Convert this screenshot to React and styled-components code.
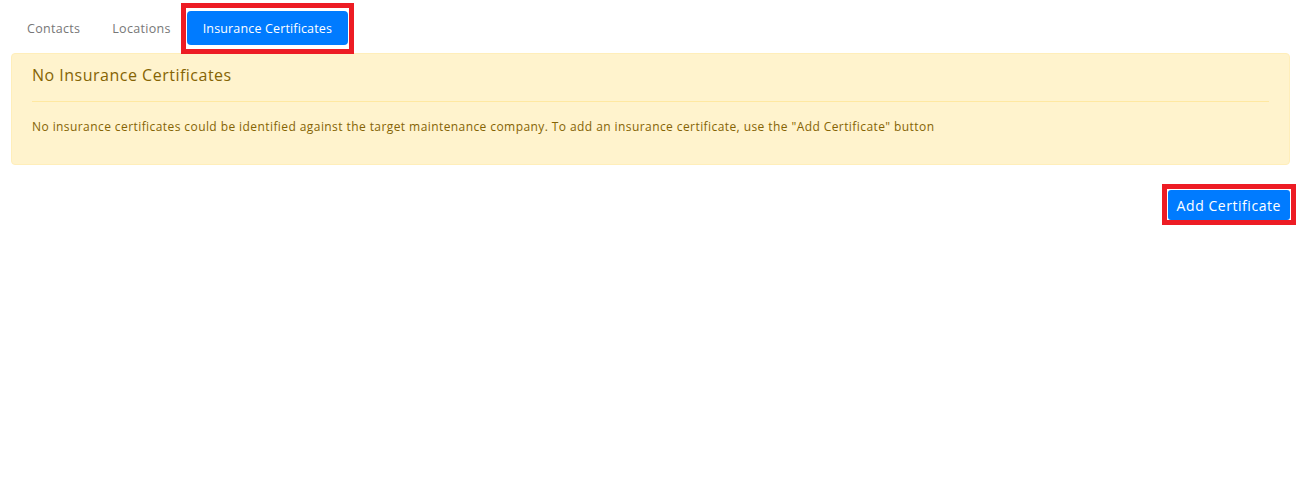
import React, { useState } from 'react'
import styled, { createGlobalStyle } from 'styled-components'

const GlobalStyle = createGlobalStyle`
  body {
    margin: 0;
    background: #fff;
    font-family: "Open Sans", "Liberation Sans", sans-serif;
  }
  * {
    box-sizing: border-box;
  }
`

const tabs = ['Contacts', 'Locations', 'Insurance Certificates']

const App = () => {
  const [active, setActive] = useState(2)

  return (
    <PageWrapper>
      <GlobalStyle />
      <TabBar>
        {tabs.map((tab, i) =>
          i === active ? (
            <Highlight key={tab} $top={8} $side={6} $bottom={9}>
              <TabLink $active onClick={() => setActive(i)}>
                {tab}
              </TabLink>
            </Highlight>
          ) : (
            <TabLink key={tab} onClick={() => setActive(i)}>
              {tab}
            </TabLink>
          )
        )}
      </TabBar>

      <Alert>
        <AlertHeading>No Insurance Certificates</AlertHeading>
        <AlertRule />
        <AlertText>
          No insurance certificates could be identified against the target maintenance company. To add an insurance
          certificate, use the "Add Certificate" button
        </AlertText>
      </Alert>

      <Actions>
        <Highlight $top={6} $side={6} $bottom={5}>
          <AddBtn type="button">Add Certificate</AddBtn>
        </Highlight>
      </Actions>
    </PageWrapper>
  )
}

export default App

const PageWrapper = styled.div`
  padding: 11px 14px 40px 11px;
`

const TabBar = styled.nav`
  display: flex;
  align-items: center;
  height: 34px;
  margin-bottom: 8px;
`

// red annotation frame drawn over an element
const Highlight = styled.span`
  position: relative;
  display: inline-flex;

  &::after {
    content: '';
    position: absolute;
    top: -${(props) => props.$top}px;
    bottom: -${(props) => props.$bottom}px;
    left: -${(props) => props.$side}px;
    right: -${(props) => props.$side}px;
    border: 5px solid #ed1c24;
    pointer-events: none;
  }
`

const TabLink = styled.a`
  display: flex;
  align-items: center;
  height: 34px;
  padding: 0 16px;
  border-radius: 4px;
  cursor: pointer;

  font-size: 12.5px;
  letter-spacing: ${(props) => (props.$active ? '0.15px' : '0.3px')};
  font-weight: ${(props) => (props.$active ? 500 : 400)};
  color: ${(props) => (props.$active ? '#fff' : '#777')};
  background: ${(props) => (props.$active ? '#007bff' : 'transparent')};
`

const Alert = styled.div`
  padding: 12px 20px;
  border: 1px solid #ffeeba;
  border-radius: 4px;
  background: #fff3cd;
  color: #856404;
`

const AlertHeading = styled.h4`
  margin: 0;
  font-size: 16px;
  font-weight: 400;
  line-height: 19px;
  letter-spacing: 0.5px;
`

const AlertRule = styled.hr`
  margin: 16px 0;
  border: 0;
  border-top: 1px solid #ffe8a1;
`

const AlertText = styled.p`
  margin: 0 0 16px;
  font-size: 12px;
  line-height: 18px;
  letter-spacing: 0.42px;
`

const Actions = styled.div`
  display: flex;
  justify-content: flex-end;
  margin-top: 25px;
`

const AddBtn = styled.button`
  height: 30px;
  padding: 0 9px;
  border: 0;
  border-radius: 3px;
  background: #007bff;
  color: #fff;
  font-family: inherit;
  font-size: 14px;
  letter-spacing: 0.55px;
  cursor: pointer;
`
